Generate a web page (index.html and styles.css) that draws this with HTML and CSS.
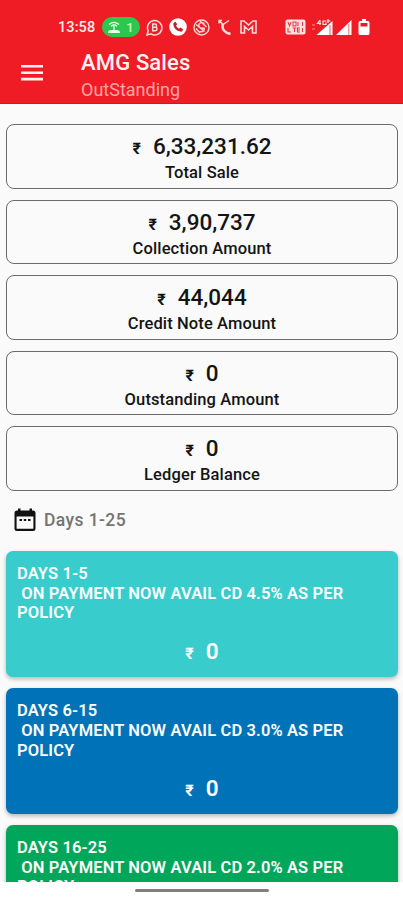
FILE: index.html
```
<!DOCTYPE html>
<html lang="en">
<head>
<meta charset="utf-8">
<title>AMG Sales</title>
<link rel="stylesheet" href="styles.css">
</head>
<body>
<div class="screen">
  <header class="top">
    <div class="status">
      <span class="clock">13:58</span>
      <span class="hotspot">
        <svg width="12" height="13" viewBox="0 0 12 13" fill="none" stroke="#e9ffe9" stroke-width="1.3"><path d="M1 3.500Q6-.8 11 3.500M3 5.200Q6 2.800 9 5.200"/><path d="M6 5v4"/><path d="M0 12q0-3 3-3h6q3 0 3 3z" fill="#e9ffe9" stroke="none"/></svg>
        <span>1</span>
      </span>
      <svg class="s-wa" width="17" height="17" viewBox="0 0 17 17" fill="none" stroke="#ffdcdc" stroke-width="1.500"><path d="M1 16l1.200-4.200A7.200 7.200 0 1 1 5 14.900z"/><path d="M6.700 5h2.200a1.600 1.600 0 0 1 0 3.300H6.700zM6.700 8.300h2.600a1.700 1.700 0 0 1 0 3.400H6.700z"/></svg>
      <svg class="s-call" width="18" height="18" viewBox="0 0 18 18"><circle cx="9" cy="9" r="8.800" fill="#fff"/><path d="M5.200 4.200l1.700-.3 1.200 2.700-1.100 1.200q1 2 3 3l1.200-1.200 2.700 1.300-.3 1.800q-.6 1.100-2.200.9Q5.100 12.300 4.300 6.500 4.200 5 5.200 4.200z" fill="#c5202a"/></svg>
      <svg class="s-ring" width="17" height="17" viewBox="0 0 17 17" fill="none" stroke="#ffd5d5" stroke-width="1.400"><circle cx="8.500" cy="8.500" r="7.500"/><path d="M11.500 4.500Q6 2.500 5.800 6t5.400 3.200Q12 13.500 6 12.600M3 5.500l8.500 7M7 2l6.500 6M3 9.500l4 4.500"/></svg>
      <svg class="s-missed" width="14" height="17" viewBox="0 0 14 17" fill="none" stroke="#ffdede"><path d="M4.500 5.500Q3.500 13 12.500 15" stroke-width="2.600"/><path d="M1 1.500l4 4 6-4M1 4.500V1.500h3" stroke-width="1.400"/></svg>
      <svg class="s-mail" width="17" height="14" viewBox="0 0 17 14" fill="none" stroke="#ffd9d9" stroke-width="1.600"><path d="M1 13V1h3l4.500 4L13 1h3v12h-3.500V6.500l-4 3.500-4-3.500V13z"/></svg>
      <svg class="s-volte" width="21" height="16" viewBox="0 0 21 16"><rect x=".5" y=".5" width="20" height="15" rx="2" fill="#ffe3e3"/><path d="M3 3l1.500 4L6 3M8 3h3v4H8zM13 3v4M3 9v4h3M7.500 9h4M9.500 9v4M15 9h-2.500v4H15M12.500 11H15M17.500 3v4M17.500 9v4" fill="none" stroke="#e13a42" stroke-width="1.100"/></svg>
      <svg class="s-sig4" width="21" height="16" viewBox="0 0 21 16"><path d="M4.500 16L20.500 2v14z" fill="#fff"/><path d="M0 6h3M0 10h3" stroke="#ff8b8b"/><path d="M18 6v10" stroke="#e85b61"/><path d="M8 1L5.500 4.500H9M8 1v5M14 2h-3v3.500h3V4h-1M16 0v4M14.500 2h4" fill="none" stroke="#ffe2e2" stroke-width="1.200"/></svg>
      <svg class="s-sig" width="16" height="16" viewBox="0 0 16 16"><path d="M0 16L15.500 1v15z" fill="#fff"/><path d="M12.800 5v11" stroke="#ef747a"/></svg>
      <svg class="s-bat" width="12" height="16" viewBox="0 0 12 16"><path d="M4 0h4v2h2q1.500 0 1.500 1.500v11q0 1.500-1.500 1.500H2q-1.500 0-1.500-1.500v-11Q.5 2 2 2h2z" fill="#fff"/><path d="M2.500 4h7v3.500h-7z" fill="#dd2028"/></svg>
    </div>
    <div class="bar">
      <svg class="menu" width="22" height="16" viewBox="0 0 22 16" fill="#fff0f0"><path d="M0 0h22v2.600H0zM0 6.400h22V9H0zM0 12.800h22v2.600H0z"/></svg>
      <div class="titles"><h1>AMG Sales</h1><p>OutStanding</p></div>
    </div>
  </header>
  <main class="content">
    <section class="box"><div class="amount"><span class="rs">₹</span><span class="num">6,33,231.62</span></div><div class="label">Total Sale</div></section>
    <section class="box"><div class="amount"><span class="rs">₹</span><span class="num">3,90,737</span></div><div class="label">Collection Amount</div></section>
    <section class="box"><div class="amount"><span class="rs">₹</span><span class="num">44,044</span></div><div class="label">Credit Note Amount</div></section>
    <section class="box"><div class="amount"><span class="rs">₹</span><span class="num">0</span></div><div class="label">Outstanding Amount</div></section>
    <section class="box"><div class="amount"><span class="rs">₹</span><span class="num">0</span></div><div class="label">Ledger Balance</div></section>
    <div class="range">
      <svg width="22" height="24" viewBox="0 0 22 24"><path d="M3 2.500h16q2.500 0 2.500 2.500v15.500q0 2.500-2.500 2.500H3Q.5 23 .5 20.500V5Q.5 2.500 3 2.500zM2.600 8.500v12.300h16.800V8.500z" fill="#111" fill-rule="evenodd"/><path d="M4 .5h2.500v3H4zM15.500.5H18v3h-2.500zM5.500 11H8v2H5.500zM9.800 11h2.400v2H9.800zM14 11h2.500v2H14z" fill="#111"/></svg>
      <span>Days 1-25</span>
    </div>
    <section class="days teal"><p class="policy">DAYS 1-5
 ON PAYMENT NOW AVAIL CD 4.5% AS PER
POLICY</p><div class="amount"><span class="rs">₹</span><span class="num">0</span></div></section>
    <section class="days blue"><p class="policy">DAYS 6-15
 ON PAYMENT NOW AVAIL CD 3.0% AS PER
POLICY</p><div class="amount"><span class="rs">₹</span><span class="num">0</span></div></section>
    <section class="days green"><p class="policy">DAYS 16-25
 ON PAYMENT NOW AVAIL CD 2.0% AS PER
POLICY</p></section>
  </main>
  <footer class="nav"><span class="pill"></span></footer>
</div>
</body>
</html>
```
FILE: styles.css
```
* { box-sizing: border-box; }
body { margin: 0; font-family: Roboto, "Noto Sans", sans-serif; background: #fff; }
h1, p { margin: 0; }
svg { display: block; flex: none; }
.screen { width: 403px; height: 900px; display: flex; flex-direction: column; overflow: hidden; }
.top { height: 104px; flex: none; background: #f01c25; border-bottom: 1px solid #d9141c; }
.status { display: flex; align-items: center; height: 46px; padding: 8px 0 0 58px; color: #ffe9e9; }
.clock { width: 44px; font-size: 14.5px; font-weight: 500; letter-spacing: .1px; }
.hotspot { display: flex; align-items: center; justify-content: center; gap: 6px; width: 38px; height: 20px; border-radius: 10px; background: #2cc84d; color: #c9f5cc; font-size: 13px; font-weight: 500; }
.s-wa { margin-left: 6px; }
.s-call { margin-left: 6px; }
.s-ring { margin-left: 6px; }
.s-missed { margin-left: 8px; }
.s-mail { margin-left: 8px; }
.s-volte { margin-left: 28px; }
.s-sig4 { margin-left: 6px; }
.s-sig { margin-left: 3px; }
.s-bat { margin-left: 6px; }
.bar { display: flex; height: 58px; padding-left: 21px; }
.menu { margin-top: 19px; }
.titles { margin-left: 38px; padding-top: 4px; }
.titles h1 { font-size: 22px; line-height: 26px; font-weight: 500; letter-spacing: .15px; color: #fff3f3; white-space: nowrap; }
.titles p { font-size: 18px; line-height: 26px; margin-top: 1px; color: #ffa5a7; }
.content { flex: 1; min-height: 0; overflow: hidden; background: #fafafa; padding: 20px 5px 0 6px; }
.box { height: 64.5px; margin-bottom: 11px; border: 1px solid #6b6b6b; border-radius: 8px; padding-top: 7px; color: #141414; }
.amount { display: flex; justify-content: center; align-items: baseline; height: 28px; line-height: 28px; }
.rs { font-size: 16px; font-weight: 700; margin-right: 12px; }
.num { font-size: 22.5px; font-weight: 500; }
.label { text-align: center; font-size: 16.5px; line-height: 22px; font-weight: 500; letter-spacing: .12px; margin-top: 2px; }
.range { display: flex; align-items: center; height: 37px; margin-bottom: 12px; padding-left: 8px; gap: 8px; font-size: 17.5px; font-weight: 500; letter-spacing: .4px; color: #747474; }
.days { height: 126px; margin-bottom: 11.3px; border-radius: 7px; padding: 13.7px 11px 0; color: #fff; box-shadow: 0 2px 4px rgba(0,0,0,.28); }
.policy { white-space: pre; font-size: 16.5px; line-height: 19.6px; font-weight: 600; letter-spacing: .13px; }
.days .amount { margin-top: 13.6px; }
.days .num { font-weight: 600; }
.teal { background: #38cccc; }
.blue { background: #0072b7; }
.green { background: #00a65a; padding-top: 13.2px; }
.nav { height: 18px; flex: none; background: #fff; display: flex; justify-content: center; padding-top: 7px; }
.pill { width: 134px; height: 3px; border-radius: 2px; background: #808080; }
```
